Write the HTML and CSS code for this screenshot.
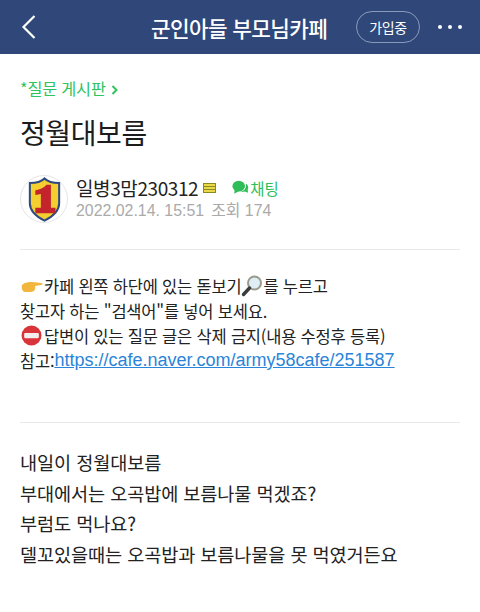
FILE: index.html
```html
<!DOCTYPE html>
<html lang="ko">
<head>
<meta charset="utf-8">
<link rel="stylesheet" href="styles.css">
</head>
<body>
<header class="topbar">
  <svg class="back" width="16" height="26" viewBox="0 0 16 26"><path d="M13.5 2 L2.5 13 L13.5 24" fill="none" stroke="#fff" stroke-width="2.2"/></svg>
  <div class="cafe-name">군인아들 부모님카페</div>
  <div class="joined">가입중</div>
  <div class="dots"><i></i><i></i><i></i></div>
</header>
<main class="content">
  <div class="board">*질문 게시판 <svg class="chev" width="7" height="10" viewBox="0 0 7 10"><path d="M1.5 1 L5.5 5 L1.5 9" fill="none" stroke="#2fc45e" stroke-width="2"/></svg></div>
  <h1 class="title">정월대보름</h1>
  <section class="author">
    <div class="avatar">
      <svg width="36" height="48" viewBox="0 0 36 48">
        <path d="M2 6 C8 6 14 5 18 1 C22 5 28 6 34 6 L34 28 C34 37 26 43 18 47 C10 43 2 37 2 28 Z" fill="#f3cf2f" stroke="#2e4a80" stroke-width="2.2"/>
        <path d="M20 8 L25 8 L25 33 L30 33 L30 39 L8 39 L8 33 L14 33 L14 18 L8 19 L8 14 C13 13 17 12 20 8 Z" fill="#c4252c"/>
      </svg>
    </div>
    <div class="meta">
      <div class="nameline">
        <span class="nick">일병3맘230312</span>
        <svg class="rank" width="13" height="10" viewBox="0 0 13 10"><rect width="13" height="10" fill="#8a8a20"/><rect x="1" y="1" width="11" height="2" fill="#ecd94a"/><rect x="1" y="4" width="11" height="2" fill="#ecd94a"/><rect x="1" y="7" width="11" height="2" fill="#ecd94a"/></svg>
        <span class="chat">
          <svg width="17" height="15" viewBox="0 0 19 16"><ellipse cx="7.5" cy="6.5" rx="7" ry="6" fill="#2fbd5a"/><path d="M3 10 L2.5 15 L8 12 Z" fill="#2fbd5a"/><path d="M15.5 3.5 C18 5 19 8 17.5 10.5 L18 14 L14.5 12.5 C12.5 13.2 10.5 13 9.5 12.6 C13 12.5 16.5 9 15.5 3.5 Z" fill="#2fbd5a"/></svg>
          채팅
        </span>
      </div>
      <div class="dateline"><span>2022.02.14. 15:51</span><span>조회 174</span></div>
    </div>
  </section>
  <section class="notice">
    <p><svg class="emoji pointer" width="22" height="14" viewBox="0 0 22 14"><path d="M1 6 C4 3 8 3 11 3 L21 4 C22 5 21 6 20 6 L14 7 C15 10 13 13 10 13 L4 13 C2 13 0 10 1 6 Z" fill="#f2b63c"/></svg>카페 왼쪽 하단에 있는 돋보기<svg class="emoji" width="22" height="22" viewBox="0 0 22 22"><circle cx="13.5" cy="8" r="6.5" fill="#dfeef5" stroke="#9a9a8c" stroke-width="2"/><path d="M8.5 13 L2.5 19.5" stroke="#3c3c3c" stroke-width="3.4" stroke-linecap="round"/></svg>를 누르고</p>
    <p>찾고자 하는 "검색어"를 넣어 보세요.</p>
    <p><svg class="emoji stop" width="21" height="21" viewBox="0 0 20 20"><circle cx="10" cy="10" r="9.5" fill="#d8343a"/><rect x="3" y="7.5" width="14" height="5" rx="1" fill="#f3eeee"/></svg>답변이 있는 질문 글은 삭제 금지(내용 수정후 등록)</p>
    <p>참고:<a class="link" href="#">https://cafe.naver.com/army58cafe/251587</a></p>
  </section>
  <section class="body-text">
    <p>내일이 정월대보름</p>
    <p>부대에서는 오곡밥에 보름나물 먹겠죠?</p>
    <p>부럼도 먹나요?</p>
    <p>델꼬있을때는 오곡밥과 보름나물을 못 먹였거든요</p>
  </section>
</main>
</body>
</html>
```
FILE: styles.css
```css
* { box-sizing: border-box; }
html, body { margin: 0; padding: 0; height: 100%; overflow: hidden; background: #fff; }
body { font-family: "Noto Sans CJK KR", "Liberation Sans", sans-serif; color: #222; }
p { margin: 0; }
.topbar { height: 54px; background: #2f4779; color: #fff; display: flex; align-items: center; padding: 0 0 0 21px; }
.back { flex: none; margin-right: 114px; }
.cafe-name { flex: none; width: 178px; font-size: 21.3px; font-weight: 500; letter-spacing: -0.6px; white-space: nowrap; }
.joined { flex: none; width: 64px; height: 32px; margin-left: 27px; border: 1px solid #8a9abb; border-radius: 16px; font-size: 14px; display: flex; align-items: center; justify-content: center; letter-spacing: -0.3px; }
.dots { display: flex; gap: 6px; margin-left: 18px; }
.dots i { width: 4px; height: 4px; border-radius: 50%; background: #fff; }
.content { padding: 0 20px; }
.board { margin-top: 23px; height: 22px; line-height: 22px; font-size: 16.3px; color: #2fc45e; letter-spacing: -0.2px; }
.chev { margin-left: 1px; }
.title { margin: 14px 0 0; font-size: 28px; line-height: 38px; font-weight: 400; letter-spacing: -0.4px; color: #1c1c1c; }
.author { display: flex; align-items: center; margin-top: 23px; padding-bottom: 25px; border-bottom: 1px solid #e8e8e8; height: 76px; }
.avatar { width: 48px; height: 48px; border-radius: 50%; border: 1px solid #e6e6e6; display: flex; align-items: center; justify-content: center; flex: none; }
.avatar svg { width: 33px; height: 45px; flex: none; }
.meta { margin-left: 8px; padding-bottom: 3px; }
.nameline { display: flex; align-items: center; height: 26px; }
.nick { font-size: 19px; letter-spacing: -0.4px; color: #222; }
.rank { margin-left: 5px; }
.chat { display: flex; align-items: center; gap: 1px; margin-left: 16px; font-size: 15.5px; color: #2fbd5a; }
.dateline { display: flex; gap: 7px; height: 20px; line-height: 20px; font-size: 15.9px; color: #aaa; font-family: "Liberation Sans", "Noto Sans CJK KR", sans-serif; }
.notice { padding: 23px 0 0; height: 173px; border-bottom: 1px solid #e8e8e8; font-size: 16.5px; letter-spacing: -0.2px; }
.notice p { display: flex; align-items: center; height: 25px; white-space: pre; }
.emoji { flex: none; }
.pointer { margin: 0 1px 0 1px; }
.stop { margin: 0 2px 0 1px; }
.link { color: #2a85d8; text-decoration: underline; font-family: "Liberation Sans", sans-serif; font-size: 18px; letter-spacing: 0; }
.body-text { padding-top: 24px; font-size: 18.6px; line-height: 30.7px; letter-spacing: -0.1px; }
```
